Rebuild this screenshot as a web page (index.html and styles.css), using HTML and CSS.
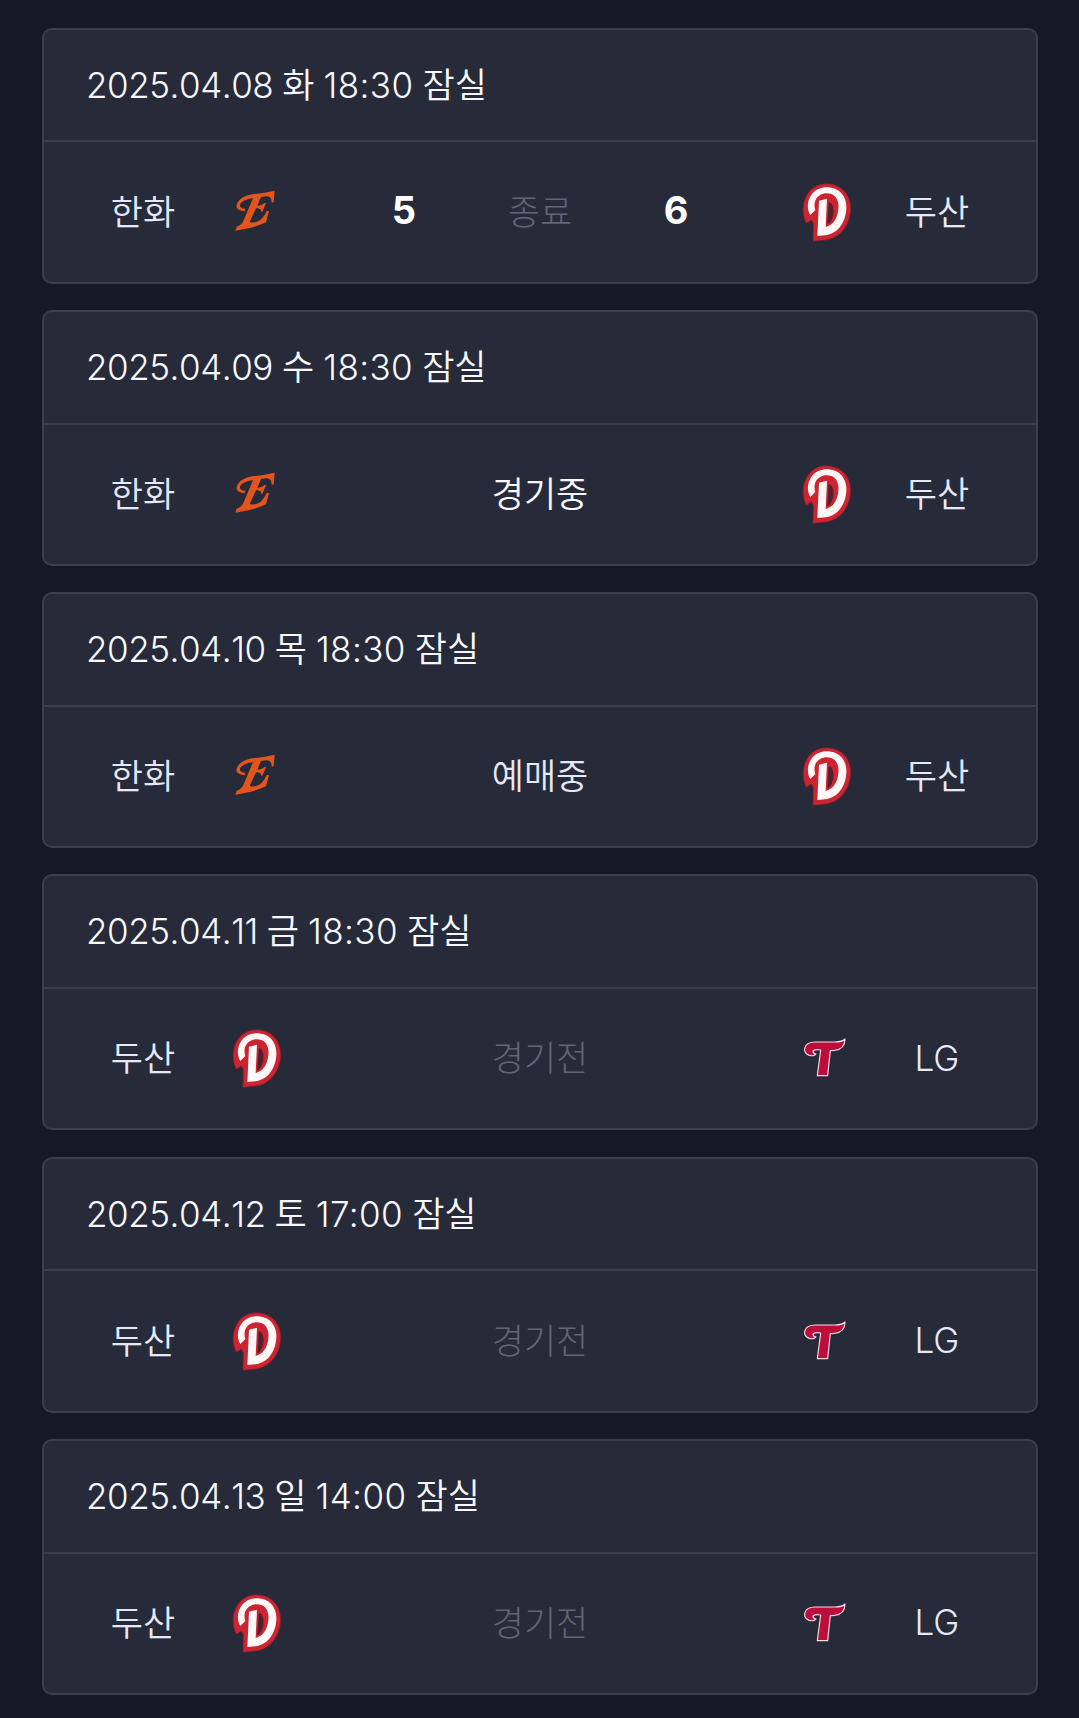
FILE: index.html
```html
<!DOCTYPE html>
<html lang="ko">
<head>
<meta charset="utf-8">
<title>경기 일정</title>
<link rel="stylesheet" href="styles.css">
</head>
<body>
<svg class="defs" aria-hidden="true">
  <symbol id="eagles" viewBox="9 7 180 180">
    <path d="M78 101L59 139Q89 134 113 125L128 96" fill="none" stroke="#3c241f" stroke-width="7"/>
    <path fill="#e2561d" d="M62 95C48 94 35 88 38 76C43 57 64 46 91 43C112 40 132 38 152 33L149 68L143 69C143 57 139 50 126 50L111 52L100 78C110 77 117 74 122 69L126 71L115 96L111 96C112 88 106 85 96 86L77 127C88 131 103 127 113 117C120 110 124 102 128 94L135 94L126 128C96 142 66 148 34 153L38 141C46 139 53 134 58 124L87 56C68 57 50 66 48 76C47 83 52 87 64 87Z"/>
  </symbol>
  <symbol id="bears" viewBox="21 21 180 180">
    <path fill="#cc2430" stroke="#7e1e2c" stroke-width="2" d="M69 199L70 146L64 135L49 145C35 117 36 82 54 55C72 29 101 22 130 29C163 37 183 66 182 103C180 151 151 189 108 195Z"/>
    <path fill="#fff8f7" d="M61 120C50 102 51 76 66 57C82 36 111 32 135 41C160 51 171 76 169 103C166 145 142 177 106 181L82 183L87 77L111 71L107 156C129 151 142 132 145 103C148 81 140 63 124 57C105 50 85 58 77 74C72 84 73 97 76 105Z"/>
    <path fill="#52202c" d="M123 84C135 98 132 126 120 143L112 148L116 81Z"/>
  </symbol>
  <symbol id="twins" viewBox="6 12 180 180">
    <path fill="#bd0d3b" stroke="#f4dbe6" stroke-width="3.5" stroke-linejoin="round" d="M58 94C41 99 27 88 29 73C32 58 45 54 61 54L119 54C134 54 144 52 150 45C150 66 139 77 119 79L106 80L98 155L67 155L77 78C67 76 59 77 54 81C54 87 57 89 63 90Z"/>
  </symbol>
</svg>
<main class="schedule">
  <article class="game">
    <h2 class="game-date"><span class="day">2025.04.08</span> 화 <span class="time">18:30</span> 잠실</h2>
    <div class="match">
      <span class="team">한화</span><svg class="logo"><use href="#eagles"/></svg>
      <div class="result"><b class="score">5</b><span class="status muted">종료</span><b class="score">6</b></div>
      <svg class="logo"><use href="#bears"/></svg><span class="team">두산</span>
    </div>
  </article>
  <article class="game">
    <h2 class="game-date"><span class="day">2025.04.09</span> 수 <span class="time">18:30</span> 잠실</h2>
    <div class="match">
      <span class="team">한화</span><svg class="logo"><use href="#eagles"/></svg>
      <div class="result"><span class="status live">경기중</span></div>
      <svg class="logo"><use href="#bears"/></svg><span class="team">두산</span>
    </div>
  </article>
  <article class="game">
    <h2 class="game-date"><span class="day">2025.04.10</span> 목 <span class="time">18:30</span> 잠실</h2>
    <div class="match">
      <span class="team">한화</span><svg class="logo"><use href="#eagles"/></svg>
      <div class="result"><span class="status">예매중</span></div>
      <svg class="logo"><use href="#bears"/></svg><span class="team">두산</span>
    </div>
  </article>
  <article class="game">
    <h2 class="game-date"><span class="day">2025.04.11</span> 금 <span class="time">18:30</span> 잠실</h2>
    <div class="match">
      <span class="team">두산</span><svg class="logo"><use href="#bears"/></svg>
      <div class="result"><span class="status muted">경기전</span></div>
      <svg class="logo"><use href="#twins"/></svg><span class="team latin">LG</span>
    </div>
  </article>
  <article class="game">
    <h2 class="game-date"><span class="day">2025.04.12</span> 토 <span class="time">17:00</span> 잠실</h2>
    <div class="match">
      <span class="team">두산</span><svg class="logo"><use href="#bears"/></svg>
      <div class="result"><span class="status muted">경기전</span></div>
      <svg class="logo"><use href="#twins"/></svg><span class="team latin">LG</span>
    </div>
  </article>
  <article class="game">
    <h2 class="game-date"><span class="day">2025.04.13</span> 일 <span class="time">14:00</span> 잠실</h2>
    <div class="match">
      <span class="team">두산</span><svg class="logo"><use href="#bears"/></svg>
      <div class="result"><span class="status muted">경기전</span></div>
      <svg class="logo"><use href="#twins"/></svg><span class="team latin">LG</span>
    </div>
  </article>
</main>
</body>
</html>
```
FILE: styles.css
```css
* { box-sizing: border-box; }

body {
  margin: 0;
  background: #161826;
  color: #e6e8f6;
  font: 350 35px/50px Inter, "Noto Sans CJK KR", sans-serif;
}

.defs { display: none; }

.schedule {
  display: flex;
  flex-direction: column;
  gap: 26.25px;
  height: 1718px;
  padding: 27.6px 41px 0 42px;
}

.game {
  flex: none;
  height: 256px;
  border: 2px solid #3b3f4c;
  border-radius: 10px;
  background: #272b39;
}

.game-date {
  height: 112.7px;
  margin: 0;
  padding: 30px 0 0 42px;
  border-bottom: 2px solid #3b3f4c;
  color: #f8f9ff;
  font-size: 35px;
  font-weight: 350;
  word-spacing: -0.8px;
  white-space: pre;
}

.day {
  font-kerning: none;
  letter-spacing: -0.45px;
}

.time { letter-spacing: 0.4px; }

.match {
  display: grid;
  grid-template-columns: 114px 114px 1fr 116px 104px;
  align-items: center;
  justify-items: center;
  height: 139.3px;
  padding: 0 47px 0.4px 42px;
}

.logo {
  width: 60px;
  height: 60px;
}

.latin { padding-bottom: 1px; }

.result {
  display: grid;
  grid-template-columns: repeat(3, 136px);
  align-items: center;
  justify-self: start;
  justify-items: center;
  margin-left: 22px;
}

.status { grid-column: 2; }
.live { color: #f8f9ff; }

.muted {
  color: #626573;
  font-weight: 300;
}

.score {
  padding-bottom: 3px;
  color: #fff;
  font-size: 38px;
  font-weight: 750;
}
```
